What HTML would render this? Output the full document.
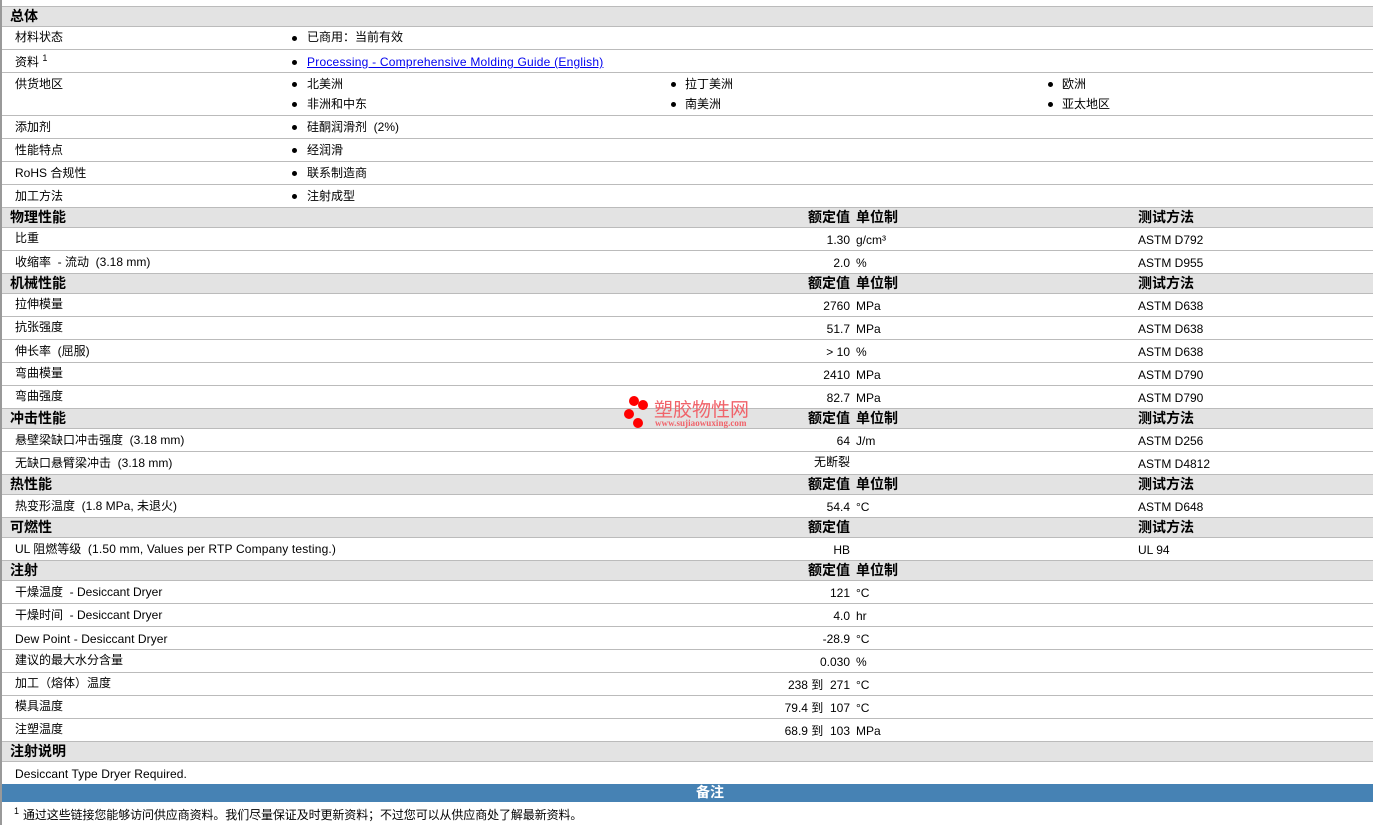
<!DOCTYPE html>
<html><head><meta charset="utf-8"><style>
html,body{margin:0;padding:0;background:#fff;width:1373px;height:825px;overflow:hidden}
body{position:relative;font:12px/16px "Liberation Sans","WenQuanYi Zen Hei","Noto Sans CJK SC",sans-serif;color:#000}
div{position:absolute;white-space:nowrap}
.s{left:0;top:0;width:2px;height:825px;background:#999}
.n{left:2px;width:1371px;height:1px;background:#bbb}
.b{left:2px;width:1371px;height:19px;background:#e3e3e3}
.h{font-weight:bold;font-size:14px;line-height:18px}
.l{left:15px;margin-top:1px}.p{left:307px;margin-top:1px}.q{left:685px;margin-top:1px}.c{left:1062px;margin-top:1px}
.v{right:523px;text-align:right;margin-top:1px}.u{left:856px;margin-top:1px}.m{left:1138px;margin-top:1px}
.d{width:5px;height:5px;border-radius:50%;background:#000}
.o{width:10px;height:10px;border-radius:50%;background:#f00}
a{color:#00e;text-decoration:underline;letter-spacing:.22px}
sup{font-size:9px;line-height:0;vertical-align:5px}
</style></head><body>
<div class="s"></div>
<div class="b" style="top:7px"></div><div class="b" style="top:208px"></div><div class="b" style="top:274px"></div><div class="b" style="top:409px"></div><div class="b" style="top:475px"></div><div class="b" style="top:518px"></div><div class="b" style="top:561px"></div><div class="b" style="top:742px"></div>
<div class="n" style="top:6px"></div><div class="n" style="top:26px"></div><div class="n" style="top:49px"></div><div class="n" style="top:72px"></div><div class="n" style="top:115px"></div><div class="n" style="top:138px"></div><div class="n" style="top:161px"></div><div class="n" style="top:184px"></div><div class="n" style="top:207px"></div><div class="n" style="top:227px"></div><div class="n" style="top:250px"></div><div class="n" style="top:273px"></div><div class="n" style="top:293px"></div><div class="n" style="top:316px"></div><div class="n" style="top:339px"></div><div class="n" style="top:362px"></div><div class="n" style="top:385px"></div><div class="n" style="top:408px"></div><div class="n" style="top:428px"></div><div class="n" style="top:451px"></div><div class="n" style="top:474px"></div><div class="n" style="top:494px"></div><div class="n" style="top:517px"></div><div class="n" style="top:537px"></div><div class="n" style="top:560px"></div><div class="n" style="top:580px"></div><div class="n" style="top:603px"></div><div class="n" style="top:626px"></div><div class="n" style="top:649px"></div><div class="n" style="top:672px"></div><div class="n" style="top:695px"></div><div class="n" style="top:718px"></div><div class="n" style="top:741px"></div><div class="n" style="top:761px"></div>
<div style="left:2px;top:784px;width:1371px;height:18px;background:#4682b4"></div>

<div class="h" style="left:10px;top:7px">总体</div>
<div class="l" style="top:28px">材料状态</div><div class="d" style="left:292px;top:36px"></div><div class="p" style="top:28px">已商用：当前有效</div>
<div class="l" style="top:53px">资料 <sup>1</sup></div><div class="d" style="left:292px;top:60px"></div><div class="p" style="top:53px"><a>Processing - Comprehensive Molding Guide (English)</a></div>
<div class="l" style="top:75px">供货地区</div>
<div class="d" style="left:292px;top:82px"></div><div class="p" style="top:75px">北美洲</div>
<div class="d" style="left:671px;top:82px"></div><div class="q" style="top:75px">拉丁美洲</div>
<div class="d" style="left:1048px;top:82px"></div><div class="c" style="top:75px">欧洲</div>
<div class="d" style="left:292px;top:102px"></div><div class="p" style="top:95px">非洲和中东</div>
<div class="d" style="left:671px;top:102px"></div><div class="q" style="top:95px">南美洲</div>
<div class="d" style="left:1048px;top:102px"></div><div class="c" style="top:95px">亚太地区</div>
<div class="l" style="top:118px">添加剂</div><div class="d" style="left:292px;top:125px"></div><div class="p" style="top:118px">硅酮润滑剂 &nbsp;(2%)</div>
<div class="l" style="top:141px">性能特点</div><div class="d" style="left:292px;top:148px"></div><div class="p" style="top:141px">经润滑</div>
<div class="l" style="top:164px">RoHS 合规性</div><div class="d" style="left:292px;top:171px"></div><div class="p" style="top:164px">联系制造商</div>
<div class="l" style="top:187px">加工方法</div><div class="d" style="left:292px;top:194px"></div><div class="p" style="top:187px">注射成型</div>

<div class="h" style="left:10px;top:208px">物理性能</div><div class="h v" style="top:207px">额定值</div><div class="h u" style="top:207px">单位制</div><div class="h m" style="top:207px">测试方法</div>
<div class="l" style="top:229px">比重</div><div class="v" style="top:231px">1.30</div><div class="u" style="top:231px">g/cm³</div><div class="m" style="top:231px">ASTM D792</div>
<div class="l" style="top:253px">收缩率 &nbsp;- 流动 &nbsp;(3.18 mm)</div><div class="v" style="top:254px">2.0</div><div class="u" style="top:254px">%</div><div class="m" style="top:254px">ASTM D955</div>

<div class="h" style="left:10px;top:274px">机械性能</div><div class="h v" style="top:273px">额定值</div><div class="h u" style="top:273px">单位制</div><div class="h m" style="top:273px">测试方法</div>
<div class="l" style="top:295px">拉伸模量</div><div class="v" style="top:297px">2760</div><div class="u" style="top:297px">MPa</div><div class="m" style="top:297px">ASTM D638</div>
<div class="l" style="top:318px">抗张强度</div><div class="v" style="top:320px">51.7</div><div class="u" style="top:320px">MPa</div><div class="m" style="top:320px">ASTM D638</div>
<div class="l" style="top:342px">伸长率 &nbsp;(屈服)</div><div class="v" style="top:343px">&gt; 10</div><div class="u" style="top:343px">%</div><div class="m" style="top:343px">ASTM D638</div>
<div class="l" style="top:364px">弯曲模量</div><div class="v" style="top:366px">2410</div><div class="u" style="top:366px">MPa</div><div class="m" style="top:366px">ASTM D790</div>
<div class="l" style="top:387px">弯曲强度</div><div class="v" style="top:389px">82.7</div><div class="u" style="top:389px">MPa</div><div class="m" style="top:389px">ASTM D790</div>

<div class="h" style="left:10px;top:409px">冲击性能</div><div class="h v" style="top:408px">额定值</div><div class="h u" style="top:408px">单位制</div><div class="h m" style="top:408px">测试方法</div>
<div class="l" style="top:431px">悬壁梁缺口冲击强度 &nbsp;(3.18 mm)</div><div class="v" style="top:432px">64</div><div class="u" style="top:432px">J/m</div><div class="m" style="top:432px">ASTM D256</div>
<div class="l" style="top:454px">无缺口悬臂梁冲击 &nbsp;(3.18 mm)</div><div class="v" style="top:453px">无断裂</div><div class="m" style="top:455px">ASTM D4812</div>

<div class="h" style="left:10px;top:475px">热性能</div><div class="h v" style="top:474px">额定值</div><div class="h u" style="top:474px">单位制</div><div class="h m" style="top:474px">测试方法</div>
<div class="l" style="top:497px">热变形温度 &nbsp;(1.8 MPa, 未退火)</div><div class="v" style="top:498px">54.4</div><div class="u" style="top:498px">°C</div><div class="m" style="top:498px">ASTM D648</div>

<div class="h" style="left:10px;top:518px">可燃性</div><div class="h v" style="top:517px">额定值</div><div class="h m" style="top:517px">测试方法</div>
<div class="l" style="top:540px">UL 阻燃等级 &nbsp;<span style="letter-spacing:.16px">(1.50 mm, Values per RTP Company testing.)</span></div><div class="v" style="top:541px">HB</div><div class="m" style="top:541px">UL 94</div>

<div class="h" style="left:10px;top:561px">注射</div><div class="h v" style="top:560px">额定值</div><div class="h u" style="top:560px">单位制</div>
<div class="l" style="top:583px">干燥温度 &nbsp;- Desiccant Dryer</div><div class="v" style="top:584px">121</div><div class="u" style="top:584px">°C</div>
<div class="l" style="top:606px">干燥时间 &nbsp;- Desiccant Dryer</div><div class="v" style="top:607px">4.0</div><div class="u" style="top:607px">hr</div>
<div class="l" style="top:630px;letter-spacing:.07px">Dew Point - Desiccant Dryer</div><div class="v" style="top:630px">-28.9</div><div class="u" style="top:630px">°C</div>
<div class="l" style="top:651px">建议的最大水分含量</div><div class="v" style="top:653px">0.030</div><div class="u" style="top:653px">%</div>
<div class="l" style="top:674px">加工（熔体）温度</div><div class="v" style="top:676px">238 到 &nbsp;271</div><div class="u" style="top:676px">°C</div>
<div class="l" style="top:697px">模具温度</div><div class="v" style="top:699px">79.4 到 &nbsp;107</div><div class="u" style="top:699px">°C</div>
<div class="l" style="top:720px">注塑温度</div><div class="v" style="top:722px">68.9 到 &nbsp;103</div><div class="u" style="top:722px">MPa</div>

<div class="h" style="left:10px;top:742px">注射说明</div>
<div class="l" style="top:765px;letter-spacing:.07px">Desiccant Type Dryer Required.</div>
<div class="h" style="left:2px;width:1416px;top:783px;text-align:center;color:#fff">备注</div>
<div style="left:14px;top:805px;font-size:9px;line-height:12px">1</div>
<div style="left:23px;top:807px;letter-spacing:-.1px">通过这些链接您能够访问供应商资料。我们尽量保证及时更新资料；不过您可以从供应商处了解最新资料。</div>

<div class="o" style="left:628.5px;top:395.5px"></div><div class="o" style="left:637.5px;top:399.5px"></div><div class="o" style="left:623.5px;top:408.5px"></div><div class="o" style="left:632.5px;top:417.5px"></div>
<div style="left:654px;top:401px;font-size:19px;line-height:20px;color:#f0636a">塑胶物性网</div>
<div style="left:655px;top:418px;font:bold 9px/10px 'Liberation Serif',serif;letter-spacing:.05px;color:#f0636a">www.sujiaowuxing.com</div>
</body></html>
